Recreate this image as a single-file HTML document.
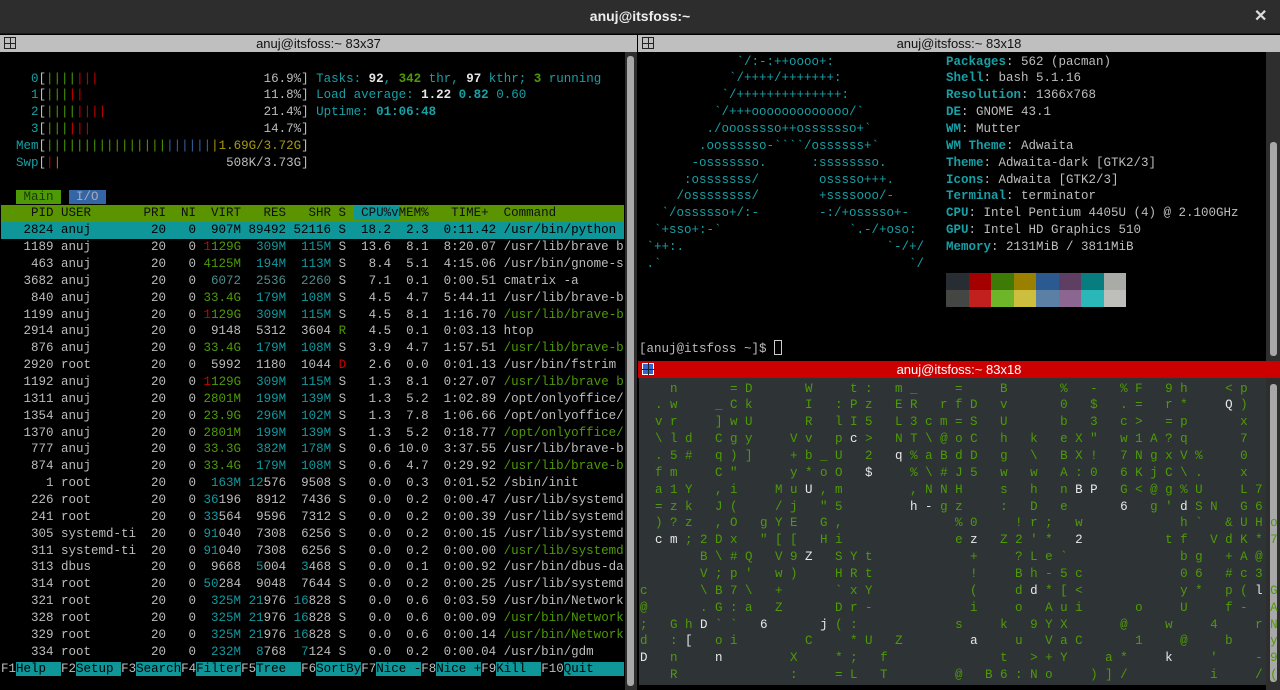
<!DOCTYPE html>
<html><head><meta charset="utf-8"><style>
*{margin:0;padding:0;box-sizing:border-box}
body{width:1280px;height:690px;background:#000;overflow:hidden;position:relative;font-family:"Liberation Mono",monospace;font-size:12.5px;color:#bdbdbd}
.abs{position:absolute}
#top{left:0;top:0;width:1280px;height:34px;background:#2d2d2d;border-bottom:1px solid #1a1a1a}
#top .t{position:absolute;left:0;width:1280px;top:8px;text-align:center;font:bold 14px "Liberation Sans",sans-serif;color:#eee}
#top .x{position:absolute;left:1254px;top:6px;font:bold 16px "Liberation Sans",sans-serif;color:#ddd}
.tb{position:absolute;height:17px;background:#c0bfc0;font:13px "Liberation Sans",sans-serif;color:#111;text-align:center;line-height:17px}
.tb.red{background:#cc0000;color:#fff}
.ico{position:absolute;left:4px;top:2px;width:12px;height:12px;border:1px solid #222}
.ico:before{content:"";position:absolute;left:5px;top:-1px;width:1px;height:12px;background:#222}
.ico:after{content:"";position:absolute;left:-1px;top:5px;width:12px;height:1px;background:#222}
.sb{position:absolute;background:#2e2e2e}
.th{position:absolute;background:#a8a8a8;border-radius:3px}
.ln{height:16.86px;line-height:16.86px;white-space:pre}
.t_{color:#17a0a6}.b{font-weight:bold}.w{color:#e6e6e6;font-weight:bold}
.g{color:#4e9a06}.r{color:#cc0000}.c{color:#11999e}.d{color:#4f8b8c}.y{color:#a89a10}.bl{color:#3465a4}.o{color:#c47a00}
.sel{background:#0e9699;color:#000}
.hdr{background:#5a9400;color:#101010}
.hc{background:#0e9699}
.tm{background:#4e9a06;color:#1b3a00}.ti{background:#3465a4;color:#aab}
.fk{background:#0e9699;color:#000}
.cm .ln{color:#4e9a06}.cm i{font-style:normal;color:#e8e8e8}
</style></head><body>
<div id="top" class="abs"><div class="t">anuj@itsfoss:~</div><div class="x">✕</div></div>

<div class="tb" style="left:0;top:35px;width:637px"><div class="ico"></div>anuj@itsfoss:~ 83x37</div>
<div class="tb" style="left:638px;top:35px;width:642px"><div class="ico"></div>anuj@itsfoss:~ 83x18</div>
<div class="tb red" style="left:638px;top:361px;width:642px"><div class="ico" style="border-color:#fff;background:#36c"></div>anuj@itsfoss:~ 83x18</div>

<div class="sb" style="left:625px;top:52px;width:12px;height:638px"></div>
<div class="th" style="left:627px;top:56px;width:7px;height:630px"></div>
<div class="sb" style="left:1266px;top:52px;width:14px;height:309px"></div>
<div class="th" style="left:1270px;top:142px;width:7px;height:214px"></div>
<div class="abs" style="left:639px;top:378px;width:627px;height:307px;background:#2e3436"></div>
<div class="sb" style="left:1266px;top:378px;width:14px;height:312px"></div>
<div class="th" style="left:1270px;top:384px;width:7px;height:298px"></div>

<div class="abs" style="left:1px;top:53.7px;width:623px">
<div class="ln"> </div>
<div class="ln">    <span class="t_">0</span>[<span class="g">||||</span><span class="r">|||</span>                      16.9%] <span class="t_">Tasks: </span><span class="w">92</span><span class="t_">, </span><span class="g b">342</span><span class="t_"> thr, </span><span class="w">97</span><span class="t_"> kthr; </span><span class="g b">3</span><span class="t_"> running</span></div>
<div class="ln">    <span class="t_">1</span>[<span class="g">|||</span><span class="r">||</span>                        11.8%] <span class="t_">Load average: </span><span class="w">1.22 </span><span class="t_ b">0.82 </span><span class="t_">0.60</span></div>
<div class="ln">    <span class="t_">2</span>[<span class="g">||||</span><span class="r">||||</span>                     21.4%] <span class="t_">Uptime: </span><span class="t_ b">01:06:48</span></div>
<div class="ln">    <span class="t_">3</span>[<span class="g">|||</span><span class="r">|||</span>                       14.7%]</div>
<div class="ln">  <span class="t_">Mem</span>[<span class="g">||||||||||||||||</span><span class="bl">||||||</span><span class="y">|1.69G/3.72G</span>]</div>
<div class="ln">  <span class="t_">Swp</span>[<span class="r">|</span><span class="o">|</span>                      508K/3.73G]</div>
<div class="ln"> </div>
<div class="ln">  <span class="tm"> Main </span> <span class="ti"> I/O </span></div>
<div class="ln hdr">    PID USER       PRI  NI  VIRT   RES   SHR S <span class="hc"> CPU%v</span>MEM%   TIME+  Command          </div>
<div class="ln sel">   2824 anuj        20   0  907M 89492 52116 S  18.2  2.3  0:11.42 /usr/bin/python </div>
<div class="ln">   1189 anuj        20   0 <span class="r">1</span><span class="g">129G</span>  <span class="c">309M</span>  <span class="c">115M</span> S  13.6  8.1  8:20.07 /usr/lib/brave b</div>
<div class="ln">    463 anuj        20   0 <span class="g">4125M</span>  <span class="c">194M</span>  <span class="c">113M</span> S   8.4  5.1  4:15.06 /usr/bin/gnome-s</div>
<div class="ln">   3682 anuj        20   0  <span class="d">6072  2536  2260</span> S   7.1  0.1  0:00.51 cmatrix -a</div>
<div class="ln">    840 anuj        20   0 <span class="g">33.4G</span>  <span class="c">179M</span>  <span class="c">108M</span> S   4.5  4.7  5:44.11 /usr/lib/brave-b</div>
<div class="ln">   1199 anuj        20   0 <span class="r">1</span><span class="g">129G</span>  <span class="c">309M</span>  <span class="c">115M</span> S   4.5  8.1  1:16.70 <span class="g">/usr/lib/brave-b</span></div>
<div class="ln">   2914 anuj        20   0  9148  5312  3604 <span class="g">R</span>   4.5  0.1  0:03.13 htop</div>
<div class="ln">    876 anuj        20   0 <span class="g">33.4G</span>  <span class="c">179M</span>  <span class="c">108M</span> S   3.9  4.7  1:57.51 <span class="g">/usr/lib/brave-b</span></div>
<div class="ln">   2920 root        20   0  5992  1180  1044 <span class="r">D</span>   2.6  0.0  0:01.13 /usr/bin/fstrim</div>
<div class="ln">   1192 anuj        20   0 <span class="r">1</span><span class="g">129G</span>  <span class="c">309M</span>  <span class="c">115M</span> S   1.3  8.1  0:27.07 <span class="g">/usr/lib/brave b</span></div>
<div class="ln">   1311 anuj        20   0 <span class="g">2801M</span>  <span class="c">199M</span>  <span class="c">139M</span> S   1.3  5.2  1:02.89 /opt/onlyoffice/</div>
<div class="ln">   1354 anuj        20   0 <span class="g">23.9G</span>  <span class="c">296M</span>  <span class="c">102M</span> S   1.3  7.8  1:06.66 /opt/onlyoffice/</div>
<div class="ln">   1370 anuj        20   0 <span class="g">2801M</span>  <span class="c">199M</span>  <span class="c">139M</span> S   1.3  5.2  0:18.77 <span class="g">/opt/onlyoffice/</span></div>
<div class="ln">    777 anuj        20   0 <span class="g">33.3G</span>  <span class="c">382M</span>  <span class="c">178M</span> S   0.6 10.0  3:37.55 /usr/lib/brave-b</div>
<div class="ln">    874 anuj        20   0 <span class="g">33.4G</span>  <span class="c">179M</span>  <span class="c">108M</span> S   0.6  4.7  0:29.92 <span class="g">/usr/lib/brave-b</span></div>
<div class="ln">      1 root        20   0  <span class="c">163M</span> <span class="c">12</span>576  9508 S   0.0  0.3  0:01.52 /sbin/init</div>
<div class="ln">    226 root        20   0 <span class="c">36</span>196  8912  7436 S   0.0  0.2  0:00.47 /usr/lib/systemd</div>
<div class="ln">    241 root        20   0 <span class="c">33</span>564  9596  7312 S   0.0  0.2  0:00.39 /usr/lib/systemd</div>
<div class="ln">    305 systemd-ti  20   0 <span class="c">91</span>040  7308  6256 S   0.0  0.2  0:00.15 /usr/lib/systemd</div>
<div class="ln">    311 systemd-ti  20   0 <span class="c">91</span>040  7308  6256 S   0.0  0.2  0:00.00 <span class="g">/usr/lib/systemd</span></div>
<div class="ln">    313 dbus        20   0  9668  <span class="c">5</span>004  <span class="c">3</span>468 S   0.0  0.1  0:00.92 /usr/bin/dbus-da</div>
<div class="ln">    314 root        20   0 <span class="c">50</span>284  9048  7644 S   0.0  0.2  0:00.25 /usr/lib/systemd</div>
<div class="ln">    321 root        20   0  <span class="c">325M</span> <span class="c">21</span>976 <span class="c">16</span>828 S   0.0  0.6  0:03.59 /usr/bin/Network</div>
<div class="ln">    328 root        20   0  <span class="c">325M</span> <span class="c">21</span>976 <span class="c">16</span>828 S   0.0  0.6  0:00.09 <span class="g">/usr/bin/Network</span></div>
<div class="ln">    329 root        20   0  <span class="c">325M</span> <span class="c">21</span>976 <span class="c">16</span>828 S   0.0  0.6  0:00.14 <span class="g">/usr/bin/Network</span></div>
<div class="ln">    334 root        20   0  <span class="c">232M</span>  <span class="c">8</span>768  <span class="c">7</span>124 S   0.0  0.2  0:00.04 /usr/bin/gdm</div>
<div class="ln">F1<span class="fk">Help  </span>F2<span class="fk">Setup </span>F3<span class="fk">Search</span>F4<span class="fk">Filter</span>F5<span class="fk">Tree  </span>F6<span class="fk">SortBy</span>F7<span class="fk">Nice -</span>F8<span class="fk">Nice +</span>F9<span class="fk">Kill  </span>F10<span class="fk">Quit    </span></div>
</div>

<div class="abs t_" style="left:639px;top:53.5px">
<div class="ln">             &#96;/:-:++oooo+:</div>
<div class="ln">            &#96;/++++/+++++++:</div>
<div class="ln">           &#96;/++++++++++++++:</div>
<div class="ln">          &#96;/+++ooooooooooooo/&#96;</div>
<div class="ln">         ./ooosssso++osssssso+&#96;</div>
<div class="ln">        .oossssso-&#96;&#96;&#96;&#96;/ossssss+&#96;</div>
<div class="ln">       -osssssso.      :ssssssso.</div>
<div class="ln">      :osssssss/        osssso+++.</div>
<div class="ln">     /ossssssss/        +ssssooo/-</div>
<div class="ln">   &#96;/ossssso+/:-        -:/+osssso+-</div>
<div class="ln">  &#96;+sso+:-&#96;                 &#96;.-/+oso:</div>
<div class="ln"> &#96;++:.                           &#96;-/+/</div>
<div class="ln"> .&#96;                                 &#96;/</div>
<div class="ln"> </div><div class="ln"> </div><div class="ln"> </div><div class="ln"> </div>
<div class="ln" style="color:#bdbdbd">[anuj@itsfoss ~]$ <span style="display:inline-block;width:8px;height:15px;border:1px solid #ccc;vertical-align:-3px"></span></div>
</div>

<div class="abs" style="left:946px;top:53.5px">
<div class="ln"><span class="t_ b">Packages</span>: 562 (pacman)</div>
<div class="ln"><span class="t_ b">Shell</span>: bash 5.1.16</div>
<div class="ln"><span class="t_ b">Resolution</span>: 1366x768</div>
<div class="ln"><span class="t_ b">DE</span>: GNOME 43.1</div>
<div class="ln"><span class="t_ b">WM</span>: Mutter</div>
<div class="ln"><span class="t_ b">WM Theme</span>: Adwaita</div>
<div class="ln"><span class="t_ b">Theme</span>: Adwaita-dark [GTK2/3]</div>
<div class="ln"><span class="t_ b">Icons</span>: Adwaita [GTK2/3]</div>
<div class="ln"><span class="t_ b">Terminal</span>: terminator</div>
<div class="ln"><span class="t_ b">CPU</span>: Intel Pentium 4405U (4) @ 2.100GHz</div>
<div class="ln"><span class="t_ b">GPU</span>: Intel HD Graphics 510</div>
<div class="ln"><span class="t_ b">Memory</span>: 2131MiB / 3811MiB</div>
</div>
<div class="abs" style="left:946px;top:273px;width:180px;height:34px;display:grid;grid-template-columns:repeat(8,22.5px);grid-template-rows:17px 17px">
<div style="background:#282d33"></div><div style="background:#a40000"></div><div style="background:#3e7b06"></div><div style="background:#9b8000"></div><div style="background:#2b5a91"></div><div style="background:#5e3f63"></div><div style="background:#087d80"></div><div style="background:#a9aba7"></div>
<div style="background:#444643"></div><div style="background:#c21f1f"></div><div style="background:#6fb52a"></div><div style="background:#cdbf3d"></div><div style="background:#5a80a6"></div><div style="background:#8b6690"></div><div style="background:#2ab7b7"></div><div style="background:#bebfba"></div>
</div>

<div class="abs cm" style="left:640px;top:380.5px">
<div class="ln">    n       = D       W     t :   m _     =     B       %   -   % F   9 h     &lt; p  </div>
<div class="ln">  . w     _ C k       I   : P z   E R   r f D   v       0   $   . =   r *     <i>Q</i> )  </div>
<div class="ln">  v r     ] w U       R   l I 5   L 3 c m = S   U       b   3   c &gt;   = p       x  </div>
<div class="ln">  \ l d   C g y     V v   p <i>c</i> &gt;   N T \ @ o C   h   k   e X "   w 1 A ? q       7  </div>
<div class="ln">  . 5 #   q ) ]     + b _ U   2   <i>q</i> % a B d D   g   \   B X !   7 N g x V %     0  </div>
<div class="ln">  f m     C "       y * o O   <i>$</i>     % \ # J 5   w   w   A : 0   6 K j C \ .     x  </div>
<div class="ln">  a 1 Y   , i     M u <i>U</i> , m         , N N H     s   h   n <i>B P</i>   G &lt; @ g % U     L 7</div>
<div class="ln">  = z k   J (     / j   " 5         <i>h -</i> g z     :   D   e       <i>6</i>   g ' <i>d</i> S N   G 6</div>
<div class="ln">  ) ? z   , O   g Y E   G ,               % 0     ! r ;   w             h &#96;   &amp; U H o H</div>
<div class="ln">  <i>c m</i> ; 2 D x   " [ [   H i               e <i>z</i>   Z 2 ' *   <i>2</i>           t f   V d K * 7</div>
<div class="ln">        B \ # Q   V 9 <i>Z</i>   S Y t             +     ? L e &#96;               b g   + A @   B</div>
<div class="ln">        V ; p '   w )     H R t             !     B h - 5 c             0 6   # c 3   %</div>
<div class="ln">c       \ B 7 \   +       &#96; x Y             (     d <i>d</i> * [ &lt;             y *   p ( <i>l</i> G y</div>
<div class="ln">@       . G : a   Z       D r -             i     o   A u i       o     U     f -   A (</div>
<div class="ln">;   G h <i>D</i> &#96; &#96;   <i>6</i>       <i>j</i> ( :             s     k   9 Y X       @     w     4     r N</div>
<div class="ln">d   : <i>[</i>   o i         C     * U   Z         <i>a</i>     u   V a C       1     @     b     y B</div>
<div class="ln"><i>D</i>   n     <i>n</i>         X     * ;   f               t   &gt; + Y     a *     <i>k</i>     '     - 9</div>
<div class="ln">    R               :     = L   T         @   B 6 : N o     ) ] /           i     / (</div>
</div>
</body></html>
